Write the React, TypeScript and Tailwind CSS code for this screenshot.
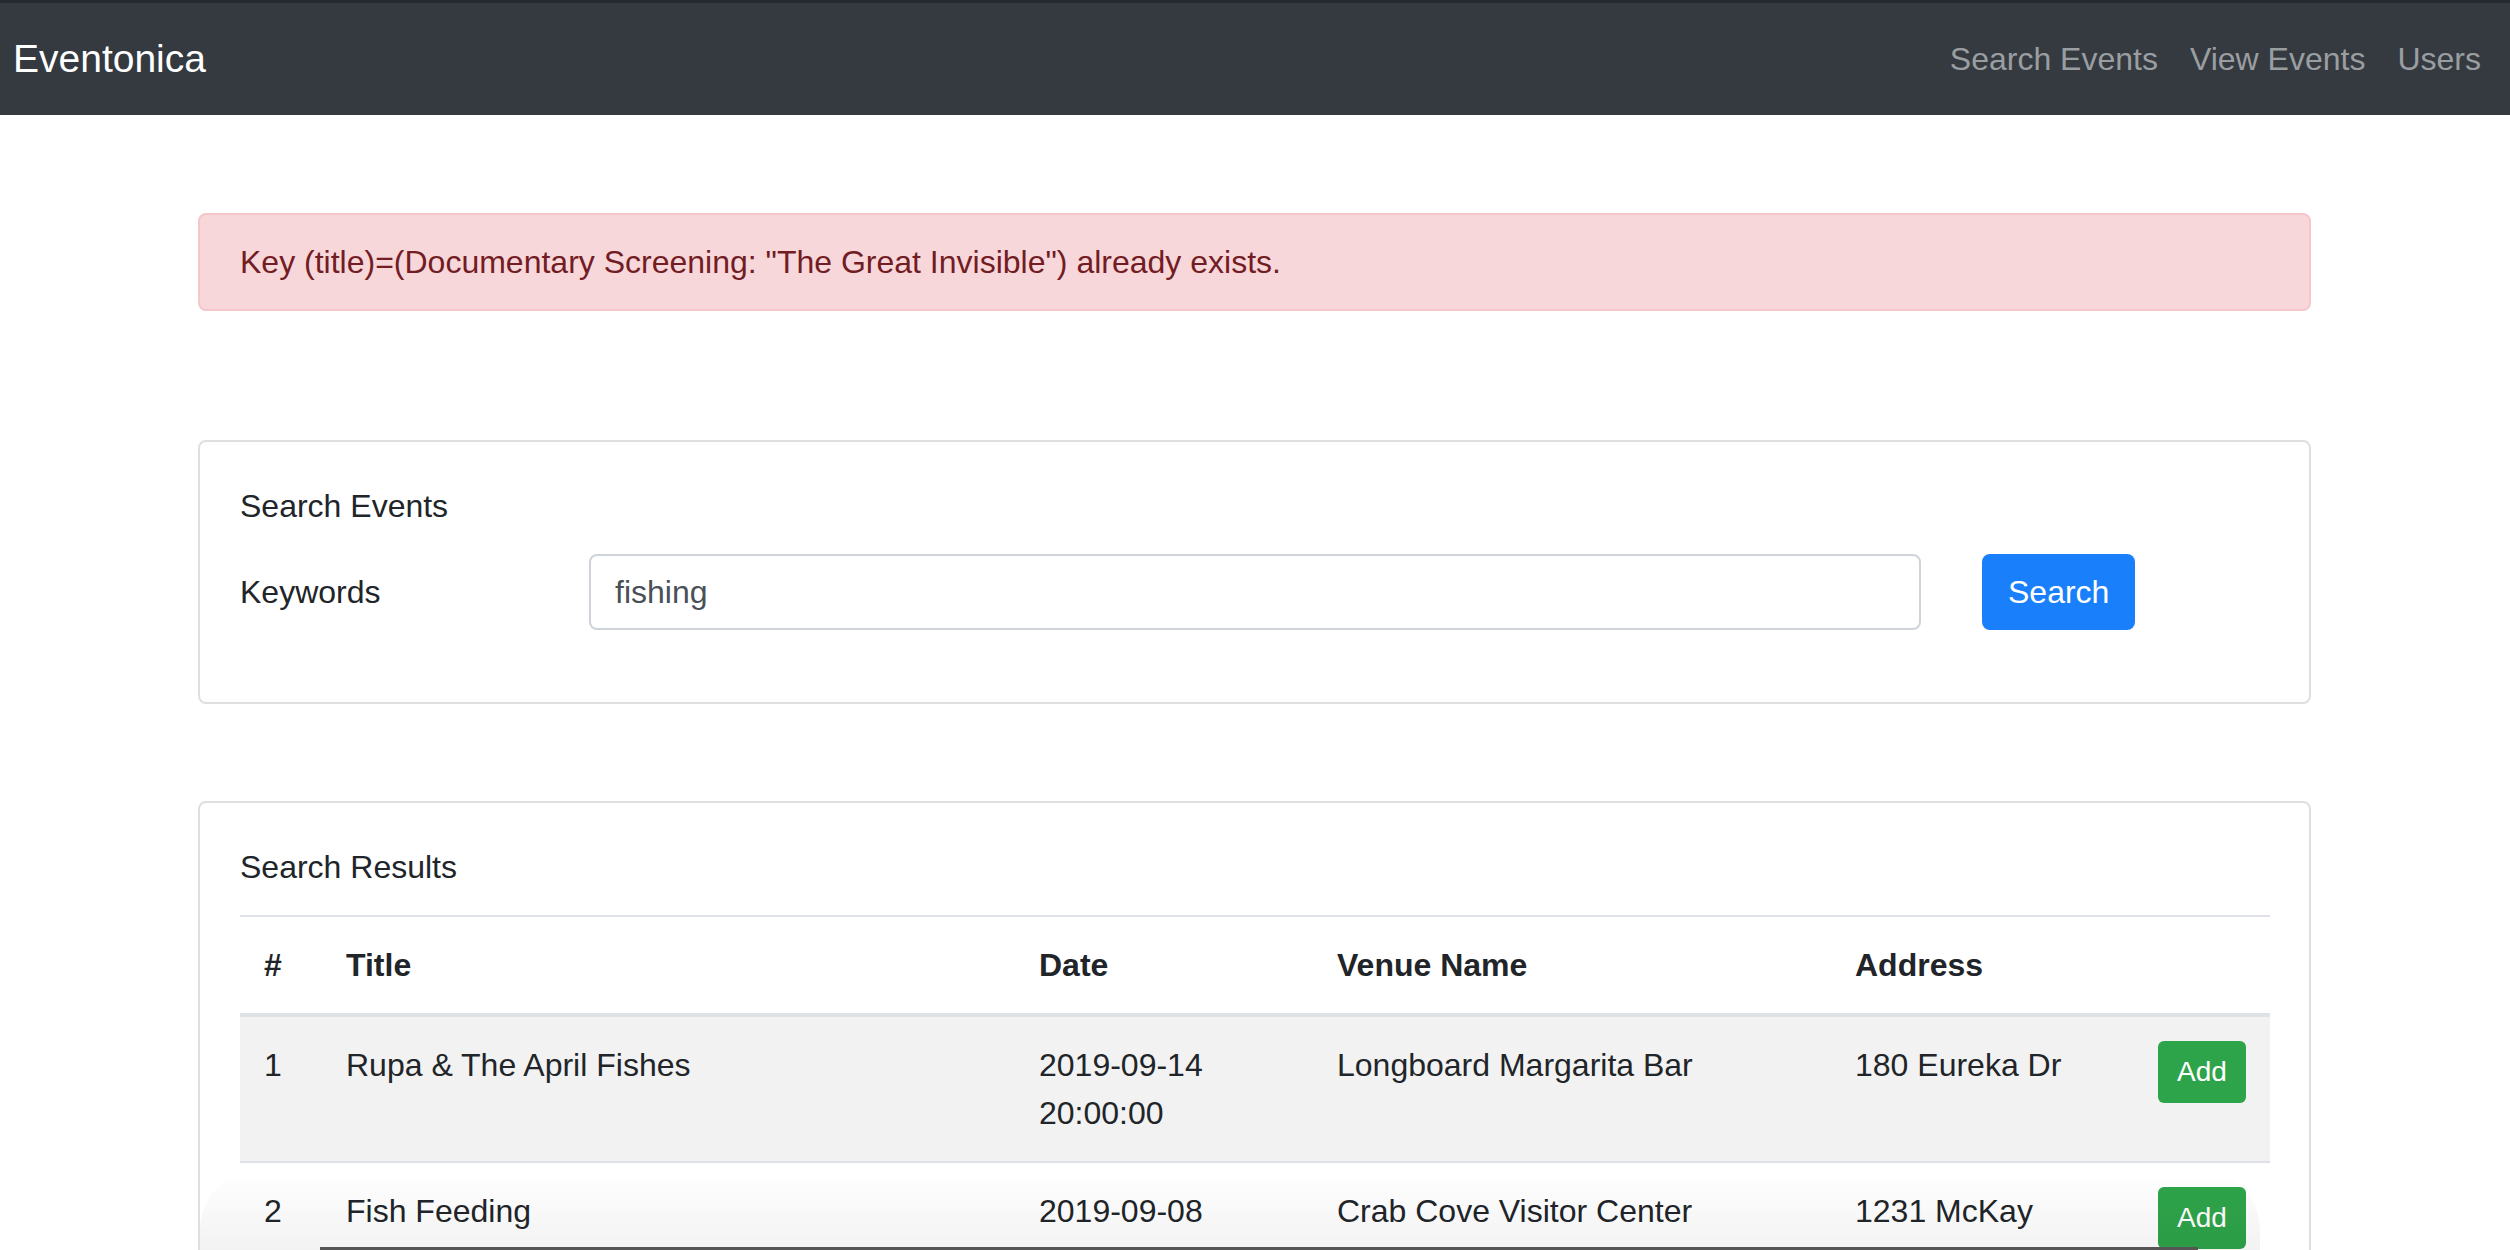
import React from "react";

const rows = [
  {
    n: "1",
    title: "Rupa & The April Fishes",
    date: "2019-09-14 20:00:00",
    venue: "Longboard Margarita Bar",
    address: "180 Eureka Dr",
  },
  {
    n: "2",
    title: "Fish Feeding",
    date: "2019-09-08 09:00:00",
    venue: "Crab Cove Visitor Center",
    address: "1231 McKay Ave",
  },
];

export default function App() {
  return (
    <div className="relative h-[1250px] overflow-hidden bg-white font-['Liberation_Sans',Arial,sans-serif] text-[32px] leading-[48px] text-[#212529]">
      <div className="h-[3px] bg-[#26292d]" />
      <nav className="flex h-[112px] items-center justify-between bg-[#343a40] px-[13px]">
        <span className="text-[39px] leading-[60px] text-white">Eventonica</span>
        <div className="flex">
          {["Search Events", "View Events", "Users"].map((l) => (
            <a key={l} className="px-[16px] text-[#9a9ea0]">
              {l}
            </a>
          ))}
        </div>
      </nav>

      <div className="ml-[198px] mr-[199px]">
        <div className="mt-[98px] rounded-lg border-2 border-[#f5c6cb] bg-[#f8d7da] px-[40px] py-[23px] text-[#721c24]">
          Key (title)=(Documentary Screening: "The Great Invisible") already exists.
        </div>

        <div className="mt-[129px] rounded-lg border-2 border-[#dfdfdf] p-[40px]">
          <div className="mb-[24px]">Search Events</div>
          <div className="mb-[32px] flex items-center">
            <label className="w-[349px]">Keywords</label>
            <input
              readOnly
              value="fishing"
              className="h-[76px] w-[1332px] rounded-lg border-2 border-[#ced4da] bg-white px-[24px] text-[32px] text-[#495057] outline-none"
            />
            <button className="ml-[61px] h-[76px] rounded-lg bg-[#1a7ffb] px-[26px] text-white">
              Search
            </button>
          </div>
        </div>

        <div className="mt-[97px] rounded-lg border-2 border-[#dfdfdf] p-[40px] pb-[80px]">
          <div className="mb-[24px]">Search Results</div>
          <table className="w-full table-fixed border-collapse">
            <colgroup>
              <col className="w-[82px]" />
              <col className="w-[693px]" />
              <col className="w-[298px]" />
              <col className="w-[518px]" />
              <col className="w-[303px]" />
              <col className="w-[136px]" />
            </colgroup>
            <thead>
              <tr>
                {["#", "Title", "Date", "Venue Name", "Address", ""].map((h, i) => (
                  <th
                    key={i}
                    className="border-t-2 border-b-4 border-[#dee2e6] p-[24px] text-left align-bottom font-bold"
                  >
                    {h}
                  </th>
                ))}
              </tr>
            </thead>
            <tbody>
              {rows.map((r, i) => (
                <tr key={r.n} className={i % 2 === 0 ? "bg-[#f2f2f2]" : "bg-white"}>
                  <td className="border-t-2 border-[#dee2e6] p-[24px] align-top">{r.n}</td>
                  <td className="border-t-2 border-[#dee2e6] p-[24px] align-top">{r.title}</td>
                  <td className="border-t-2 border-[#dee2e6] p-[24px] align-top">{r.date}</td>
                  <td className="border-t-2 border-[#dee2e6] p-[24px] align-top">{r.venue}</td>
                  <td className="border-t-2 border-[#dee2e6] p-[24px] align-top">
                    <div className="max-w-[225px]">{r.address}</div>
                  </td>
                  <td className="border-t-2 border-[#dee2e6] p-[24px] align-top">
                    <button className="h-[62px] w-[88px] rounded-[6px] bg-[#2ea44a] text-[28px] leading-[42px] text-white">
                      Add
                    </button>
                  </td>
                </tr>
              ))}
            </tbody>
          </table>
        </div>
      </div>

      <div className="pointer-events-none absolute bottom-0 left-[200px] right-[250px] h-[80px] rounded-tl-[60px] rounded-tr-[60px] bg-gradient-to-b from-transparent to-black/[0.05]" />
      <div className="pointer-events-none absolute bottom-0 left-[320px] right-[312px] h-[3px] bg-[#555555]" />
    </div>
  );
}
